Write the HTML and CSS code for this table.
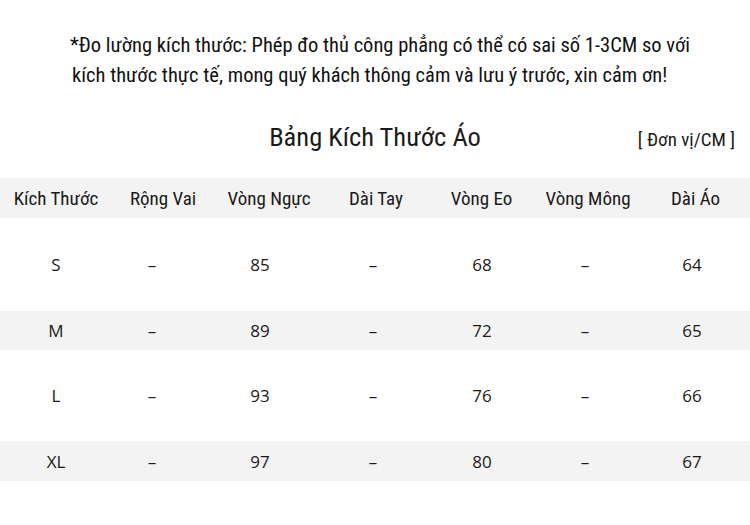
FILE: index.html
```html
<!DOCTYPE html>
<html lang="vi">
<head>
<meta charset="utf-8">
<title>Bảng Kích Thước Áo</title>
<link rel="stylesheet" href="styles.css">
</head>
<body>
<div class="page">
  <p class="note"><span class="line">*Đo lường kích thước: Phép đo thủ công phẳng có thể có sai số 1-3CM so với</span><span class="line second">kích thước thực tế, mong quý khách thông cảm và lưu ý trước, xin cảm ơn!</span></p>
  <div class="title-row">
    <span></span>
    <h1 class="title">Bảng Kích Thước Áo</h1>
    <span class="unit">[ Đơn vị/CM ]</span>
  </div>
  <div class="table">
    <div class="row head">
      <div class="cell">Kích Thước</div>
      <div class="cell">Rộng Vai</div>
      <div class="cell">Vòng Ngực</div>
      <div class="cell">Dài Tay</div>
      <div class="cell">Vòng Eo</div>
      <div class="cell">Vòng Mông</div>
      <div class="cell">Dài Áo</div>
    </div>
    <div class="row data tall">
      <div class="cell">S</div><div class="cell">–</div><div class="cell">85</div><div class="cell">–</div><div class="cell">68</div><div class="cell">–</div><div class="cell">64</div>
    </div>
    <div class="row data band">
      <div class="cell">M</div><div class="cell">–</div><div class="cell">89</div><div class="cell">–</div><div class="cell">72</div><div class="cell">–</div><div class="cell">65</div>
    </div>
    <div class="row data tall short">
      <div class="cell">L</div><div class="cell">–</div><div class="cell">93</div><div class="cell">–</div><div class="cell">76</div><div class="cell">–</div><div class="cell">66</div>
    </div>
    <div class="row data band last">
      <div class="cell">XL</div><div class="cell">–</div><div class="cell">97</div><div class="cell">–</div><div class="cell">80</div><div class="cell">–</div><div class="cell">67</div>
    </div>
  </div>
</div>
</body>
</html>
```
FILE: styles.css
```css
html, body {
  margin: 0;
  padding: 0;
  background: #ffffff;
}
.page {
  width: 750px;
  height: 525px;
  overflow: hidden;
  color: #1a1a1a;
  font-family: "Roboto Condensed", "Liberation Sans Narrow", "Roboto", sans-serif;
  font-stretch: condensed;
}
.note {
  margin: 0;
  padding: 30px 0 0 70px;
  font-size: 20.5px;
  line-height: 30px;
  color: #111111;
}
.line {
  display: block;
  white-space: nowrap;
}
.line.second {
  padding-left: 2px;
}
.title-row {
  display: grid;
  grid-template-columns: 1fr auto 1fr;
  align-items: center;
  margin-top: 29px;
  height: 36px;
}
.title {
  margin: 0;
  font-size: 26.5px;
  font-weight: 400;
  line-height: 36px;
}
.unit {
  justify-self: end;
  padding-right: 15px;
  padding-top: 4px;
  font-size: 19px;
}
.table {
  margin-top: 23px;
  overflow: hidden;
}
.row {
  display: grid;
  align-items: center;
  text-align: center;
}
.head {
  height: 40px;
  background: #f3f3f3;
  font-size: 19px;
  grid-template-columns: 112px 102px 110px 104px 107px 106px 109px;
}
.data {
  font-family: "Open Sans", "Noto Sans", sans-serif;
  font-stretch: normal;
  font-size: 17px;
  grid-template-columns: 112px 80px 136px 90px 128px 78px 136px;
}
.tall {
  height: 93px;
  background: #ffffff;
}
.tall.short {
  height: 91px;
}
.band {
  height: 39px;
  background: #f3f3f3;
}
.band.last {
  height: 40px;
}
```
